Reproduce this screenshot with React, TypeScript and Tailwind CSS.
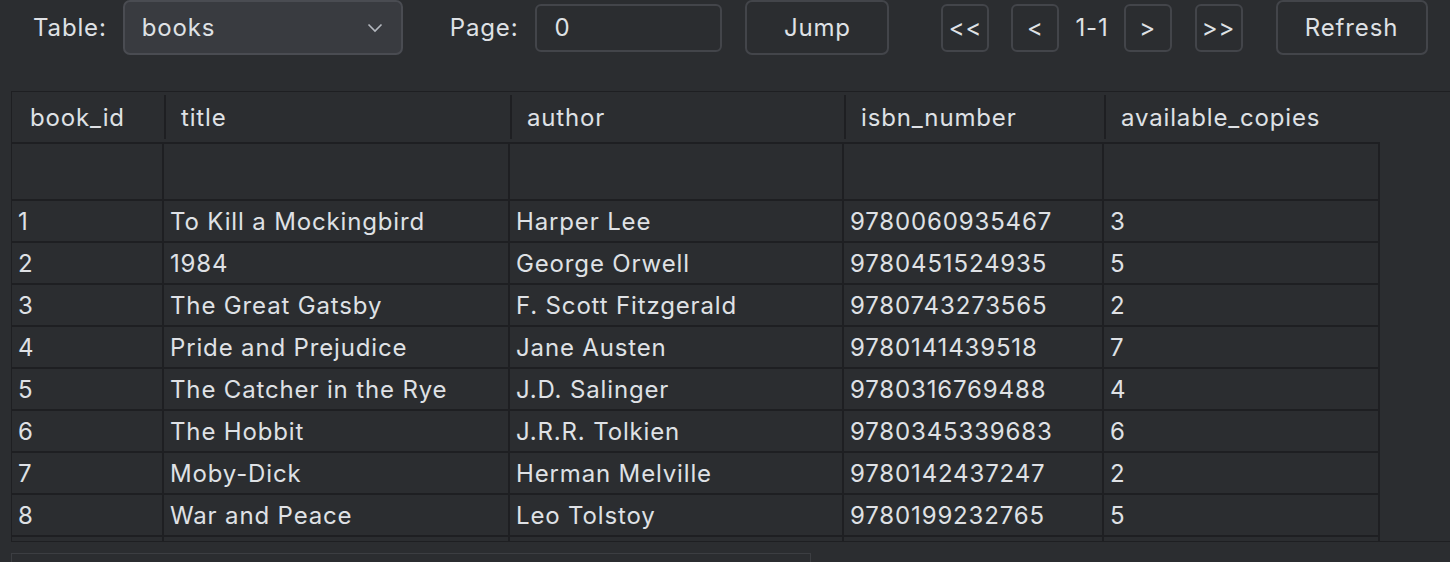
import React from "react";

const columns = [
  { key: "book_id", w: "w-[152px]" },
  { key: "title", w: "w-[346px]" },
  { key: "author", w: "w-[334px]" },
  { key: "isbn_number", w: "w-[260px]" },
  { key: "available_copies", w: "w-[276px]" },
];

const books = [
  ["1", "To Kill a Mockingbird", "Harper Lee", "9780060935467", "3"],
  ["2", "1984", "George Orwell", "9780451524935", "5"],
  ["3", "The Great Gatsby", "F. Scott Fitzgerald", "9780743273565", "2"],
  ["4", "Pride and Prejudice", "Jane Austen", "9780141439518", "7"],
  ["5", "The Catcher in the Rye", "J.D. Salinger", "9780316769488", "4"],
  ["6", "The Hobbit", "J.R.R. Tolkien", "9780345339683", "6"],
  ["7", "Moby-Dick", "Herman Melville", "9780142437247", "2"],
  ["8", "War and Peace", "Leo Tolstoy", "9780199232765", "5"],
];

const NavButton = ({ label, className = "" }: { label: string; className?: string }) => (
  <button className={`w-[48px] h-[48px] rounded-[6px] border-2 border-[#43454a] bg-[#2b2d30] flex items-center justify-center ${className}`}>
    {label}
  </button>
);

export default function App() {
  return (
    <div
      className="w-[1450px] h-[562px] overflow-hidden bg-[#2b2d30] text-[#dfe1e5] text-[24px] tracking-[0.85px] leading-none"
      style={{ fontFamily: "Inter, 'Noto Sans', sans-serif" }}
    >
      {/* toolbar */}
      <div className="h-[55px] flex items-center">
        <span className="ml-[33px]">Table:</span>
        <div className="ml-[16px] w-[280px] h-[55px] rounded-[7px] border-2 border-[#4a4c52] bg-[#393b40] flex items-center pl-[17px] pr-[18px]">
          <span className="flex-1">books</span>
          <svg width="16" height="10" viewBox="0 0 16 10" fill="none">
            <polyline points="1.5,1.5 8,8 14.5,1.5" stroke="#b4b8bf" strokeWidth="1.6" />
          </svg>
        </div>
        <span className="ml-[47px]">Page:</span>
        <div className="ml-[17px] w-[187px] h-[48px] rounded-[6px] border-2 border-[#43454a] flex items-center pl-[17px]">
          0
        </div>
        <button className="ml-[23px] w-[144px] h-[55px] rounded-[7px] border-2 border-[#43454a] flex items-center justify-center">
          Jump
        </button>
        <NavButton label="<<" className="ml-[52px]" />
        <NavButton label="<" className="ml-[22px]" />
        <span className="ml-[16px]">1-1</span>
        <NavButton label=">" className="ml-[15px]" />
        <NavButton label=">>" className="ml-[23px]" />
        <button className="ml-[33px] w-[152px] h-[55px] rounded-[7px] border-2 border-[#43454a] flex items-center justify-center">
          Refresh
        </button>
      </div>

      {/* table viewport */}
      <div className="mt-[36px] ml-[11px] h-[451px] border-l border-t border-b border-[#1e1f22] overflow-hidden">
        <div className="w-[1368px] h-[52px] flex border-b-2 border-[#1e1f22]">
          {columns.map((c, i) => (
            <div key={c.key} className={`${c.w} h-full flex items-center`}>
              {i > 0 && <div className="w-[2px] h-[44px] bg-[#1e1f22]" />}
              <span className={`pt-[2px] ${i === 0 ? "pl-[18px]" : "pl-[15px]"}`}>{c.key}</span>
            </div>
          ))}
        </div>
        <div className="w-[1368px] h-[57px] flex border-b-2 border-[#1e1f22]">
          {columns.map((c) => (
            <div key={c.key} className={`${c.w} h-full border-r-2 border-[#1e1f22]`} />
          ))}
        </div>
        {books.map((row) => (
          <div key={row[0]} className="w-[1368px] h-[42px] flex border-b-2 border-[#1e1f22]">
            {row.map((cell, i) => (
              <div
                key={i}
                className={`${columns[i].w} h-full border-r-2 border-[#1e1f22] flex items-center pl-[6px] pt-[2px]`}
              >
                {cell}
              </div>
            ))}
          </div>
        ))}
        <div className="w-[1368px] h-[20px] flex">
          {columns.map((c) => (
            <div key={c.key} className={`${c.w} h-full border-r-2 border-[#1e1f22]`} />
          ))}
        </div>
      </div>

      {/* horizontal scrollbar */}
      <div className="mt-[11px] ml-[11px] w-[800px] h-[20px] border border-[#3c3e42] bg-[#2b2d30]" />
    </div>
  );
}
